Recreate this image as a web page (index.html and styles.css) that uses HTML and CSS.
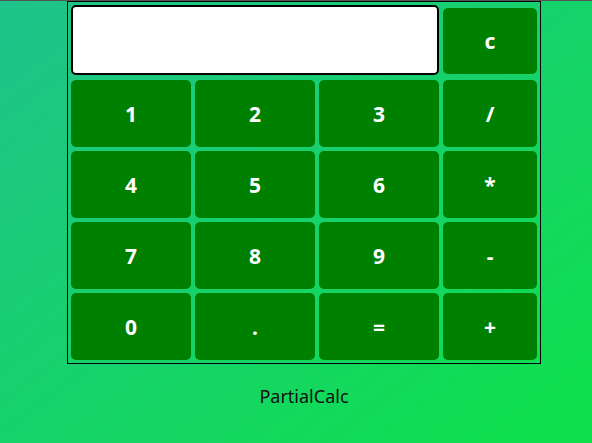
FILE: index.html
```html
<!DOCTYPE html>
<html>
<head>
<meta charset="utf-8">
<link rel="stylesheet" href="styles.css">
</head>
<body>
<div class="topline"></div>
<div class="page">
  <div class="calc">
    <div class="display"></div>
    <button class="key">c</button>
    <button class="key">1</button>
    <button class="key">2</button>
    <button class="key">3</button>
    <button class="key">/</button>
    <button class="key">4</button>
    <button class="key">5</button>
    <button class="key">6</button>
    <button class="key">*</button>
    <button class="key">7</button>
    <button class="key">8</button>
    <button class="key">9</button>
    <button class="key">-</button>
    <button class="key">0</button>
    <button class="key">.</button>
    <button class="key">=</button>
    <button class="key">+</button>
  </div>
  <div class="title">PartialCalc</div>
</div>
</body>
</html>
```
FILE: styles.css
```css
html, body {
  margin: 0;
  height: 100%;
}
body {
  background: linear-gradient(to bottom right, #1fc38b, #0ee14a);
  font-family: "Noto Sans", "Open Sans", sans-serif;
}
.topline {
  height: 1px;
  background: #555;
}
.page {
  padding-left: 16px;
}
.calc {
  width: 466px;
  margin: 0 auto;
  border: 1px solid #000;
  padding: 3px;
  display: grid;
  grid-template-columns: 120px 120px 120px 94px;
  grid-template-rows: 71px 67px 67px 67px 67px;
  column-gap: 4px;
  row-gap: 4px;
}
.display {
  grid-column: 1 / 4;
  height: 70px;
  box-sizing: border-box;
  border: 2px solid #000;
  border-radius: 5px;
  background: #fff;
  width: 368px;
}
.key {
  background: #008000;
  border: none;
  border-radius: 5px;
  color: #fff;
  font-family: "Noto Sans", "Open Sans", sans-serif;
  font-weight: bold;
  font-size: 21px;
  padding: 0;
  height: 67px;
  align-self: center;
}
.calc .key:nth-child(2) {
  height: 66px;
}
.title {
  text-align: center;
  font-size: 18px;
  color: #111;
  margin-top: 20px;
}
```
